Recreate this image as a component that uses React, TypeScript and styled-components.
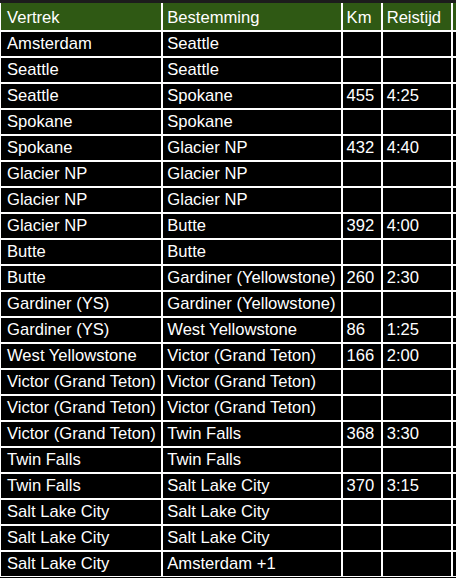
import React from 'react';
import styled, { createGlobalStyle } from 'styled-components';

const GlobalStyle = createGlobalStyle`
  html, body {
    margin: 0;
    padding: 0;
    background: #000;
    overflow: hidden;
  }
  body {
    font-family: "Liberation Sans", Arial, sans-serif;
  }
`;

const Page = styled.div`
  width: 456px;
  height: 578px;
  overflow: hidden;
  background: #000;
  border-top: 3px solid #1c1c1c;
  box-sizing: border-box;
`;

const Table = styled.table`
  border-collapse: separate;
  border-spacing: 0;
  table-layout: fixed;
  width: 552px;
  color: #fff;
  font-size: 16.6px;
  line-height: 18px;

  th,
  td {
    box-sizing: border-box;
    border: 1px solid #fff;
    text-align: left;
    white-space: nowrap;
    overflow: hidden;
    padding-left: 4px;
    padding-right: 4px;
  }

  th:first-child,
  td:first-child {
    padding-left: 6px;
  }

  th {
    border-top: none;
    background: #2f5914;
    font-weight: normal;
    padding-top: 6px;
    padding-bottom: 3px;
  }

  td {
    background: #000;
    padding-top: 3px;
    padding-bottom: 3px;
  }
`;

const HeadCell = styled.th<{ $w: number }>`
  width: ${(p) => p.$w}px;
`;

type Row = [string, string, string?, string?];

const rows: Row[] = [
  ['Amsterdam', 'Seattle'],
  ['Seattle', 'Seattle'],
  ['Seattle', 'Spokane', '455', '4:25'],
  ['Spokane', 'Spokane'],
  ['Spokane', 'Glacier NP', '432', '4:40'],
  ['Glacier NP', 'Glacier NP'],
  ['Glacier NP', 'Glacier NP'],
  ['Glacier NP', 'Butte', '392', '4:00'],
  ['Butte', 'Butte'],
  ['Butte', 'Gardiner (Yellowstone)', '260', '2:30'],
  ['Gardiner (YS)', 'Gardiner (Yellowstone)'],
  ['Gardiner (YS)', 'West Yellowstone', '86', '1:25'],
  ['West Yellowstone', 'Victor (Grand Teton)', '166', '2:00'],
  ['Victor (Grand Teton)', 'Victor (Grand Teton)'],
  ['Victor (Grand Teton)', 'Victor (Grand Teton)'],
  ['Victor (Grand Teton)', 'Twin Falls', '368', '3:30'],
  ['Twin Falls', 'Twin Falls'],
  ['Twin Falls', 'Salt Lake City', '370', '3:15'],
  ['Salt Lake City', 'Salt Lake City'],
  ['Salt Lake City', 'Salt Lake City'],
  ['Salt Lake City', 'Amsterdam +1'],
];

const App = () => {
  return (
    <Page>
      <GlobalStyle />
      <Table>
        <thead>
          <tr>
            <HeadCell $w={162}>Vertrek</HeadCell>
            <HeadCell $w={179}>Bestemming</HeadCell>
            <HeadCell $w={40}>Km</HeadCell>
            <HeadCell $w={70}>Reistijd</HeadCell>
            <HeadCell $w={100} />
          </tr>
        </thead>
        <tbody>
          {rows.map((r, i) => (
            <tr key={i}>
              <td>{r[0]}</td>
              <td>{r[1]}</td>
              <td>{r[2] || ''}</td>
              <td>{r[3] || ''}</td>
              <td />
            </tr>
          ))}
        </tbody>
      </Table>
    </Page>
  );
};

export default App;
